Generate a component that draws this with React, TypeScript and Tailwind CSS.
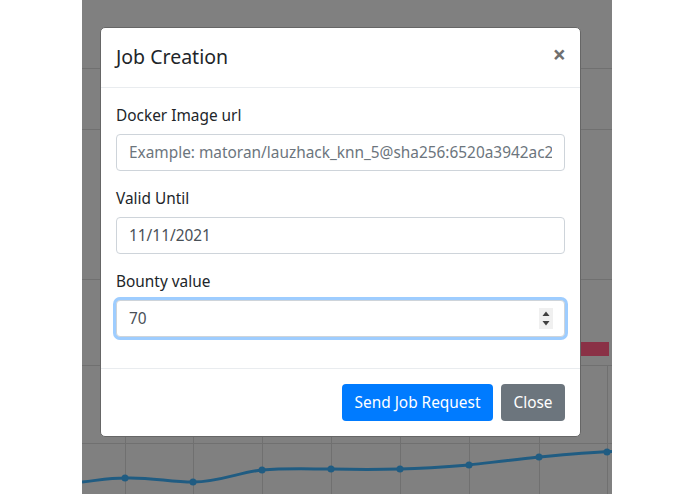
const font = { fontFamily: '"Noto Sans", "Open Sans", sans-serif' };

const rows = [68, 129, 279, 365, 443];
const columns = [125, 193, 262, 331, 400, 469, 539, 607];
const points: [number, number][] = [
  [125, 478],
  [193, 482],
  [262, 470],
  [331, 469],
  [400, 469],
  [469, 465],
  [539, 457],
  [607, 452],
];
const curve =
  "M82 482 C100 480 110 478 125 478 C150 477 170 482 193 482 C220 482 240 472 262 470 C285 468 310 469 331 469 C355 469.5 380 469.5 400 469 C425 468.5 445 467 469 465 C495 462 515 459.5 539 457 C565 454.5 585 452.5 612 451.5";

function Chart() {
  return (
    <svg className="absolute inset-0 h-full w-full" viewBox="82 0 530 494">
      {rows.map((y) => (
        <line key={y} x1={82} x2={612} y1={y + 0.5} y2={y + 0.5} stroke="#707070" strokeWidth={1} />
      ))}
      {columns.map((x) => (
        <line key={x} x1={x + 0.5} x2={x + 0.5} y1={365} y2={494} stroke="#707070" strokeWidth={1} />
      ))}
      <rect x={581} y={342} width={28} height={14} fill="#8a3146" />
      <path d={curve} fill="none" stroke="#205c82" strokeWidth={3} />
      {points.map(([x, y]) => (
        <circle key={x} cx={x} cy={y} r={3.5} fill="#205c82" />
      ))}
    </svg>
  );
}

const labelClass = "mb-[6px] block pt-[1px] text-[15.4px] leading-[24px]";
const inputClass =
  "block h-[37px] w-full rounded-[4px] border border-[#ced4da] bg-white px-[12px] text-[15.4px] text-[#495057] outline-none placeholder:text-[#6c757d]";

export default function App() {
  return (
    <div className="h-[494px] w-[695px] overflow-hidden bg-white text-[#212529]" style={font}>
      <div className="relative ml-[82px] h-[494px] w-[530px] overflow-hidden bg-[#808080] pl-[18px] pt-[27px]">
        <Chart />
        <div className="relative w-[481px] rounded-[5px] border border-[#666666] bg-white">
          <div className="flex h-[60px] items-center justify-between border-b border-[#e9ecef] pl-[15px] pr-[14px]">
            <h5 className="relative -top-[1px] text-[19.5px] font-normal leading-[28px]">Job Creation</h5>
            <button type="button" className="relative -top-[3px] text-[23px] font-bold leading-none text-[#6f6f6f]">
              ×
            </button>
          </div>

          <div className="h-[280px] px-[15px] pt-[15px]">
            <div className="mb-[15px]">
              <label className={labelClass}>Docker Image url</label>
              <input
                type="text"
                className={inputClass}
                placeholder="Example: matoran/lauzhack_knn_5@sha256:6520a3942ac2"
              />
            </div>
            <div className="mb-[15px]">
              <label className={labelClass}>Valid Until</label>
              <input type="text" className={inputClass} defaultValue="11/11/2021" />
            </div>
            <div>
              <label className={labelClass}>Bounty value</label>
              <div className="relative">
                <input
                  type="number"
                  defaultValue={70}
                  className={`${inputClass} border-[#80bdff] shadow-[0_0_0_3px_rgba(0,123,255,0.38)] [appearance:textfield] [&::-webkit-inner-spin-button]:appearance-none`}
                />
                <svg className="absolute right-[12px] top-[8px] bg-[#f0f0f0]" width="14" height="21" viewBox="0 0 14 21">
                  <path d="M7 3.5 L10.5 8 L3.5 8 Z" fill="#404040" />
                  <path d="M3.5 13 L10.5 13 L7 17.5 Z" fill="#404040" />
                </svg>
              </div>
            </div>
          </div>

          <div className="flex justify-end gap-2 border-t border-[#e9ecef] p-[15px]">
            <button type="button" className="h-[37px] w-[151px] rounded-[4px] bg-[#007bff] text-[15.4px] text-white">
              Send Job Request
            </button>
            <button type="button" className="h-[37px] w-[64px] rounded-[4px] bg-[#6c757d] text-[15.4px] text-white">
              Close
            </button>
          </div>
        </div>
      </div>
    </div>
  );
}
